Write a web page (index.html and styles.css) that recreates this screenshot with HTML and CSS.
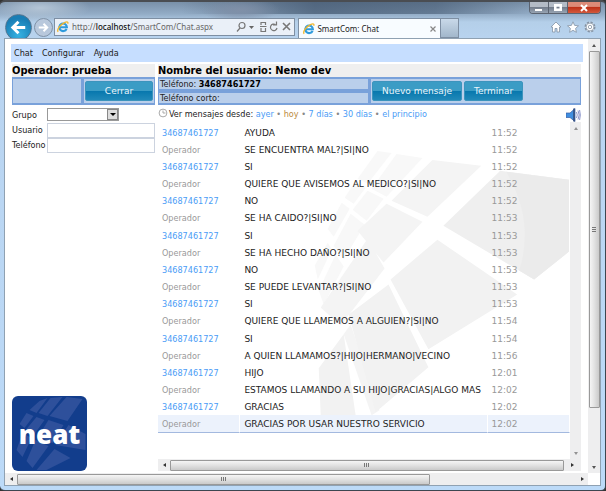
FILE: index.html
```html
<!DOCTYPE html>
<html lang="es">
<head>
<meta charset="utf-8">
<title>SmartCom: Chat</title>
<link rel="stylesheet" href="styles.css">
</head>
<body>
<svg class="defs" aria-hidden="true">
  <symbol id="ie" viewBox="0 0 12 12">
    <path d="M9.6 7.8A3.8 3.8 0 1 1 9.9 6.2H3.4" fill="none" stroke="#2f9bdc" stroke-width="2.1"/>
    <path d="M1.2 10.8C-.5 9 3 3.400 8 1.300c2.200-.9 3.400-.3 2.700 1.500" fill="none" stroke="#f0b62c" stroke-width="1.300"/>
  </symbol>
</svg>
<div class="window">
  <header class="titlebar">
    <div class="controls">
      <button aria-label="Minimizar"><svg viewBox="0 0 10 8"><path d="M1 5h7v2H1z"/></svg></button>
      <button aria-label="Maximizar"><svg viewBox="0 0 10 8"><path fill-rule="evenodd" d="M1 0h8v7H1zM3.500 2.500v2h3v-2z"/></svg></button>
      <button class="close" aria-label="Cerrar ventana"><svg viewBox="0 0 10 8"><path d="M2 1l6 6M8 1L2 7" stroke="#fff" stroke-width="2"/></svg></button>
    </div>
  </header>
  <nav class="toolbar">
    <button class="back" aria-label="Atrás"><svg viewBox="0 0 26 26"><path d="M20 13H8M13 7l-6 6 6 6" fill="none" stroke="#fff" stroke-width="3"/></svg></button>
    <button class="forward" aria-label="Adelante"><svg viewBox="0 0 18 18"><path d="M4 9h9M9 5l4 4-4 4" fill="none" stroke="#fff" stroke-width="2"/></svg></button>
    <div class="address">
      <svg class="ie"><use href="#ie"/></svg>
      <span class="url">http://<b>localhost</b>/SmartCom/Chat.aspx</span>
      <svg class="tools" viewBox="0 0 56 12" fill="none" stroke="#777" stroke-width="1.200">
        <circle cx="6" cy="4.500" r="3"/><path d="M4 7L1 10.500"/>
        <path d="M13 5h5l-2.500 3z" fill="#666" stroke="none"/>
        <path d="M25 4V1.500h4.500V4M25 7v3.500h4.500V7M24 5.500h6.500" />
        <path d="M39.500 3.500A3.300 3.300 0 1 0 41 7M37 4h3.500V.5"/>
        <path d="M47 2l7 7M54 2l-7 7" stroke-width="1.600"/>
      </svg>
    </div>
    <div class="tab"><svg class="ie"><use href="#ie"/></svg><span>SmartCom: Chat</span>
      <svg class="tab-close" viewBox="0 0 6 6"><path d="M.5.5l5 5M5.500.5l-5 5" stroke="#888" stroke-width="1.200"/></svg></div>
    <div class="new-tab"></div>
    <svg class="quick" viewBox="0 0 46 12" fill="#fff" stroke="#8493a5" stroke-width=".8">
      <path d="M1 6l5-5 5 5H9.500v5H7V7.500H5V11H2.500V6z"/>
      <path d="M23 .8l1.600 3.600 3.900.4-2.900 2.600.8 3.900L23 9.300l-3.400 2 .8-3.900-2.900-2.600 3.900-.4z"/>
      <circle cx="40" cy="6" r="4.600" stroke-dasharray="2.200 1.400" stroke-width="1.800"/><circle cx="40" cy="6" r="3.900"/><circle cx="40" cy="6" r="1.700"/>
    </svg>
  </nav>
  <div class="view">
    <main class="page">
      <nav class="menu"><a href="#">Chat</a><a href="#">Configurar</a><a href="#">Ayuda</a></nav>
      <div class="columns">
        <aside class="side">
          <h2>Operador: prueba</h2>
          <div class="panel operator"><div class="slot"></div><div class="slot actions"><button class="btn wide">Cerrar</button></div></div>
          <form class="filters">
            <label for="grupo">Grupo</label><span class="pick"><select id="grupo"><option></option></select><i></i></span>
            <label for="usuario">Usuario</label><input id="usuario" type="text">
            <label for="telefono">Teléfono</label><input id="telefono" type="text">
          </form>
          <div class="logo">
            <svg viewBox="0 0 74 75" fill="#2e509b" aria-hidden="true">
              <path d="M27 5l8-3-11 15-7-3zM38 2l12-1-15 19-9-3zM54 1l16 2-15 22-18-5zM14 17l7 3-9 12-5-4zM24 21l8 3-10 14-8-5zM36 24l15 5-11 18-14-7zM56 29l17 9v16L43 49zM10 37l9 5-9 19-6-7zM23 44l13 6-16 22-6-7zM42 53l16 9-24 12h-10z"/>
            </svg>
            <span>neat</span>
          </div>
        </aside>
        <section class="chat">
          <h2>Nombre del usuario: Nemo dev</h2>
          <div class="panel user">
            <div class="phones"><div class="slot">Teléfono: <b>34687461727</b></div><div class="slot">Teléfono corto:</div></div>
            <div class="slot actions"><button class="btn">Nuevo mensaje</button><button class="btn">Terminar</button></div>
          </div>
          <div class="since">
            <svg class="clock" viewBox="0 0 10 10"><circle cx="5" cy="5" r="3.900" fill="none" stroke="#aaa"/><path d="M5 2.500V5h2.500" fill="none" stroke="#aaa"/></svg>
            <span>Ver mensajes desde: <a href="#">ayer</a> <i>•</i> <a href="#" class="current">hoy</a> <i>•</i> <a href="#">7 días</a> <i>•</i> <a href="#">30 días</a> <i>•</i> <a href="#">el principio</a></span>
            <svg class="sound" viewBox="0 0 15 14"><path d="M0 5h4l5-4.500v13L4 9.500H0z" fill="#3f8ee0" stroke="#3a5ca0" stroke-width=".7"/><path d="M8 .5v13" stroke="#334a78" stroke-width="1.500"/><path d="M10.500 4q1.500 3 0 6M12 2.500q2.400 4.500 0 9M13.600 2q1.400 5 0 10" fill="none" stroke="#7d88c4" stroke-width=".9"/></svg>
          </div>
          <div class="log">
            <div class="messages">
              <svg class="mark" viewBox="158 122 412 338" preserveAspectRatio="xMaxYMin meet" aria-hidden="true">
                <g fill="#f8f8f8">
                  <path d="M377 151l14 2-24 31-10-5zM396 154l26 4-36 39-15-8z"/>
                  <path d="M354 183l11 5-12 16-9-6zM367 191l16 8-17 22-14-11zM341 203l8 6-16 28-6-8zM350 214l14 11-21 35-10-14zM327 243l4 7-14 30-3-14zM335 255l8 12-20 38-5-14z"/>
                </g>
                <path fill="#f4f4f4" d="M432 160l49 6-54 51-36-16zM386 204l36 18-39 41-26-32zM367 239l17 30-44 57-20-18zM343 335l7-10 29 86-8 5z"/>
                <path fill="#f2f2f2" d="M348 315l40-30 40 83-53 45zM318 369l25-34 12 81h-35zM437 240l80 55-89 55-38-70z"/>
                <path fill="#efefef" d="M500 171l69 9v72l-35 28-91-54z"/>
                <path fill="#ebebeb" d="M506 172l63 8v72l-35 28-15-9q16-50-13-99z"/>
              </svg>
              <table>
                <tbody>
                  <tr class="in"><td>34687461727</td><td>AYUDA</td><td>11:52</td></tr>
                  <tr><td>Operador</td><td>SE ENCUENTRA MAL?|SI|NO</td><td>11:52</td></tr>
                  <tr class="in"><td>34687461727</td><td>SI</td><td>11:52</td></tr>
                  <tr><td>Operador</td><td>QUIERE QUE AVISEMOS AL MEDICO?|SI|NO</td><td>11:52</td></tr>
                  <tr class="in"><td>34687461727</td><td>NO</td><td>11:52</td></tr>
                  <tr><td>Operador</td><td>SE HA CAIDO?|SI|NO</td><td>11:53</td></tr>
                  <tr class="in"><td>34687461727</td><td>SI</td><td>11:53</td></tr>
                  <tr><td>Operador</td><td>SE HA HECHO DAÑO?|SI|NO</td><td>11:53</td></tr>
                  <tr class="in"><td>34687461727</td><td>NO</td><td>11:53</td></tr>
                  <tr><td>Operador</td><td>SE PUEDE LEVANTAR?|SI|NO</td><td>11:53</td></tr>
                  <tr class="in"><td>34687461727</td><td>SI</td><td>11:53</td></tr>
                  <tr><td>Operador</td><td>QUIERE QUE LLAMEMOS A ALGUIEN?|SI|NO</td><td>11:54</td></tr>
                  <tr class="in"><td>34687461727</td><td>SI</td><td>11:54</td></tr>
                  <tr><td>Operador</td><td>A QUIEN LLAMAMOS?|HIJO|HERMANO|VECINO</td><td>11:56</td></tr>
                  <tr class="in"><td>34687461727</td><td>HIJO</td><td>12:01</td></tr>
                  <tr><td>Operador</td><td>ESTAMOS LLAMANDO A SU HIJO|GRACIAS|ALGO MAS</td><td>12:02</td></tr>
                  <tr class="in"><td>34687461727</td><td>GRACIAS</td><td>12:02</td></tr>
                  <tr class="last"><td>Operador</td><td>GRACIAS POR USAR NUESTRO SERVICIO</td><td>12:02</td></tr>
                </tbody>
              </table>
            </div>
            <div class="bar vertical idle"><i class="arrow up"></i><i class="arrow down"></i></div>
            <div class="bar horizontal inner"><i class="arrow left"></i><div class="thumb"></div><i class="arrow right"></i></div>
          </div>
        </section>
      </div>
    </main>
    <div class="bar vertical main-v"><i class="arrow up"></i><div class="thumb"></div><i class="arrow down"></i></div>
    <div class="bar horizontal main-h"><i class="arrow left"></i><div class="thumb"></div><i class="arrow right"></i></div>
  </div>
</div>
</body>
</html>
```
FILE: styles.css
```css
* { box-sizing: border-box; }
body {
  margin: 0;
  background: #333;
  color: #222;
  font: 9px/12px "DejaVu Sans Condensed", "DejaVu Sans", sans-serif;
}
a { color: #4a9cf6; text-decoration: none; }
button { font: inherit; padding: 0; border: 0; }
svg { display: block; flex: none; }
.defs { position: absolute; width: 0; height: 0; }

.window {
  display: flex;
  flex-direction: column;
  min-height: 100vh;
  padding: 0 4px 4px 4px;
  border: 1px solid #3c4650;
  border-top: 2px solid #4a4d52;
  border-left-width: 0;
  border-radius: 5px;
  background:
    radial-gradient(ellipse 50px 14px at 40px 6px, #b4c5d6, transparent),
    radial-gradient(ellipse 40px 12px at 240px 8px, #8090a8, transparent),
    linear-gradient(90deg, transparent 30%, #3c5068aa 52%, #3c506888 72%, transparent 88%) 0 0 / 100% 12px no-repeat,
    linear-gradient(#7990a8, #93acc6 12px, #b4cfe9 20px, #b9d4f0 40px, #bcdaf8);
}
.titlebar { display: flex; justify-content: flex-end; height: 14px; }
.controls {
  display: flex;
  height: 12px;
  border: 1px solid #5b6370;
  border-top: 0;
  border-radius: 0 0 4px 4px;
  overflow: hidden;
}
.controls button {
  display: grid;
  place-items: center;
  width: 19px;
  background: linear-gradient(#b3bbc6 45%, #747e8d 50%, #98a4b3);
  border-right: 1px solid #5b6370;
}
.controls .close { width: 32px; border: 0; background: linear-gradient(#dc8b78 40%, #bf3219 50%, #d2593d); }
.controls svg { width: 10px; height: 8px; fill: #fff; }

.toolbar { display: flex; align-items: center; height: 22px; font: 8px/12px "Noto Sans", sans-serif; }
.back, .forward { border-radius: 50%; flex: none; }
.back {
  width: 27px; height: 27px;
  margin: 0 2px 0 1px;
  border: 1px solid #54758f;
  background: radial-gradient(circle at 50% 80%, #37b2e2, #197eb5 70%);
}
.forward {
  width: 19px; height: 19px;
  margin-right: 1px;
  border: 1px solid #8092a7;
  background: #b8c8dc;
}
.back svg, .forward svg { width: 100%; height: 100%; }
.address, .tab, .new-tab { border: 1px solid #7e8fa3; }
.address {
  display: flex;
  align-items: center;
  flex: 245 1 0;
  height: 18px;
  padding: 0 2px;
  gap: 3px;
  background: #eaf0f8;
  color: #666;
  white-space: nowrap;
}
.address b { font-weight: 500; color: #111; }
.url { flex: 1; }
.ie { width: 12px; height: 12px; }
.tools { width: 56px; height: 12px; }
.tab {
  display: flex;
  align-items: center;
  flex: 138 1 0;
  align-self: flex-end;
  height: 20px;
  margin-left: 3px;
  padding: 0 4px;
  gap: 2px;
  border-bottom: 0;
  background: #f8fcff;
}
.tab span { flex: 1; }
.tab-close { width: 6px; height: 6px; }
.new-tab { width: 19px; height: 20px; margin-left: -1px; background: linear-gradient(#c9d9e9, #a2b7cb); align-self: flex-end; }
.quick { width: 46px; height: 12px; margin: 0 5px 0 91px; }

.view {
  display: grid;
  grid-template: 1fr 12px / 1fr 12px;
  flex: 1;
  border: 1px solid #8fa1b2;
  background: #fff;
}
.page { display: flex; flex-direction: column; padding: 5px 5px 0 6px; min-width: 0; }
.menu { display: flex; gap: 9px; height: 18px; padding: 0 3px; background: #c6deff; line-height: 18px; }
.menu a { color: #222; }
.columns { display: grid; grid-template-columns: 143px minmax(0, 1fr); gap: 3px; flex: 1; padding: 2px 2px 2px 1px; }
h2 { margin: 0; height: 13px; background: #efefef; color: #000; font: bold 11px/13px "DejaVu Sans Condensed", "DejaVu Sans", sans-serif; white-space: nowrap; }
.side, .chat { display: flex; flex-direction: column; min-width: 0; }

.panel { display: grid; gap: 3px; padding: 2px 1px; height: 28px; background: #79a1da; }
.operator { grid-template-columns: 1fr 70px; }
.user { grid-template-columns: 1fr 1fr; }
.slot { background: #bacfeb; }
.phones { display: grid; gap: 4px; }
.phones .slot { padding-left: 1px; line-height: 10px; white-space: nowrap; }
.phones b { color: #000; }
.actions { display: flex; align-items: center; gap: 2px; padding: 0 1px; }
.btn {
  height: 20px;
  padding: 0 9px;
  border: 1px solid #3c94bd;
  border-radius: 2px;
  background: linear-gradient(#3b9cc5 48%, #0878ae 52%, #2189b9);
  color: #eaf5fb;
  font: 9px/18px "DejaVu Sans", sans-serif;
  white-space: nowrap;
}
.wide { flex: 1; }

.filters { display: grid; grid-template-columns: 35px 1fr; grid-auto-rows: 14px; row-gap: 1px; margin-top: 3px; line-height: 14px; }
.filters input, .filters select { width: 100%; min-width: 0; height: 15px; margin: 0; padding: 0 1px; border: 1px solid #ccd3df; background: #fff; font: inherit; }
.pick { position: relative; width: 72px; height: 13px; }
.filters select { height: 13px; border-color: #999; appearance: none; }
.pick i { position: absolute; right: 1px; top: 1px; width: 11px; height: 11px; border: 1px solid #888; background: #ddd; pointer-events: none; }
.pick i::after { content: ""; position: absolute; left: 2px; top: 3px; border: 3px solid transparent; border-top-color: #000; border-bottom: 0; width: 0; }

.logo { display: grid; width: 75px; height: 75px; margin: auto 0 0; border-radius: 6px; overflow: hidden; background: #123d8c; }
.logo svg, .logo span { grid-area: 1 / 1; }
.logo svg { width: 75px; height: 75px; }
.logo span { z-index: 1; place-self: center; color: #fff; font: 800 26px/36px "Open Sans", "Noto Sans", sans-serif; }

.since { display: flex; align-items: center; gap: 1px; height: 17px; white-space: nowrap; }
.since span { flex: 1; }
.since i { color: #888; font-style: normal; }
.since .current { color: #bd8b42; }
.clock { width: 10px; height: 10px; align-self: flex-start; margin-top: 3px; }
.sound { width: 15px; height: 14px; align-self: flex-end; }

.log { display: grid; grid-template: 1fr 12px / minmax(0, 1fr) 11px; flex: 1; }
.messages { position: relative; padding-top: 2px; }
.mark { position: absolute; inset: 0; width: 100%; height: 100%; }
table { position: relative; width: 100%; border-spacing: 0; }
td { height: 17px; padding: 0 4px; color: #999; white-space: nowrap; border-right: 1px solid transparent; background-clip: padding-box; }
tr:nth-child(6n) td { height: 18px; }
td:nth-child(1) { width: 20%; }
td:nth-child(2) { color: #222; }
td:nth-child(3) { width: 20%; }
td:nth-child(2), td:nth-child(3) { font-family: "DejaVu Sans", sans-serif; }
.in td:first-child { color: #4a9cf6; }
.last td { background-color: #ecf2fc; border-bottom: 1px solid #a3b9df; }

.bar { display: flex; align-items: center; background: #eeeeef; }
.vertical { flex-direction: column; }
.idle { justify-content: space-between; }
.thumb { display: grid; place-items: center; border: 1px solid #999; border-radius: 1px; }
.horizontal .thumb { height: 11px; background: linear-gradient(#f5f5f5, #e2e2e2 48%, #cacaca); }
.vertical .thumb { width: 11px; flex: 0 1 357px; margin-bottom: auto; background: linear-gradient(90deg, #f5f5f5, #e2e2e2 48%, #cacaca); }
.thumb::after { content: ""; width: 6px; height: 4px; background: repeating-linear-gradient(90deg, #777 0 1px, transparent 1px 2px); }
.vertical .thumb::after { width: 4px; height: 6px; background: repeating-linear-gradient(#777 0 1px, transparent 1px 2px); }
.inner { grid-column: 1 / -1; }
.inner .thumb { flex: 1; }
.main-h .thumb { flex: 0 1 413px; margin-right: auto; }
.arrow { display: grid; place-items: center; flex: 0 0 12px; width: 12px; height: 12px; }
.inner .arrow.right { flex-basis: 17px; }
.arrow::after { content: ""; border: 2px solid transparent; }
.up::after { border-bottom: 3px solid #555; border-top: 0; }
.down::after { border-top: 3px solid #555; border-bottom: 0; }
.left::after { border-right: 3px solid #333; border-left: 0; }
.right::after { border-left: 3px solid #333; border-right: 0; }
.idle .arrow::after { opacity: .6; }
```
